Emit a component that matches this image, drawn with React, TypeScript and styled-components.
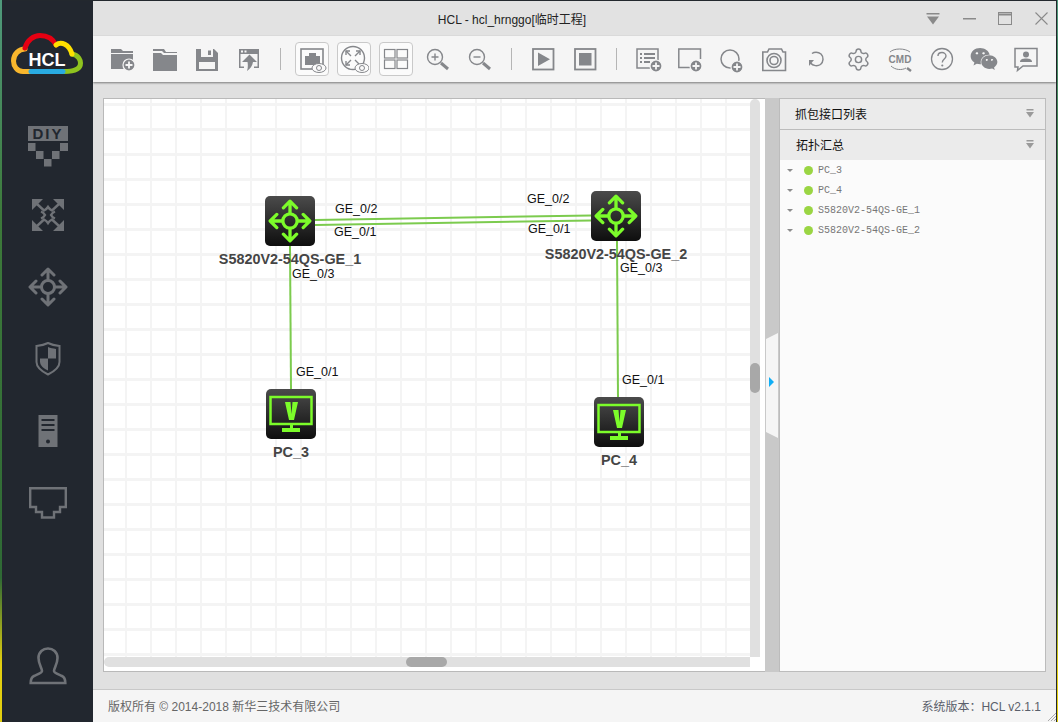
import React from 'react';
import styled, { createGlobalStyle } from 'styled-components';
import { Settings } from 'lucide-react';
import { FaWeixin } from 'react-icons/fa';

const GRAY = '#85878b';
const SIDE_GRAY = '#6f7277';
const SIDE_DARK = '#22272f';
const GREEN = '#7cfc2a';
const LINK = '#7ccb4e';

const GlobalStyle = createGlobalStyle`
  html, body {
    margin: 0;
    height: 100%;
    overflow: hidden;
  }
  body {
    background: linear-gradient(180deg, #4f9a7c 0%, #3d7a3a 30%, #2f6a35 80%, #e3cf10 92%, #e3cf10 100%);
    font-family: "Liberation Sans", "Noto Sans CJK SC", sans-serif;
  }
`;

const Window = styled.div`
  display: flex;
  height: 722px;
  margin: 0 1px 0 2px;
  box-sizing: border-box;
  border-top: 1px solid #23282e;
  border-right: 1px solid #23282e;
  background: #e0e0e0;
`;

const Sidebar = styled.nav`
  width: 91px;
  flex: none;
  background: ${SIDE_DARK};
  display: flex;
  flex-direction: column;
  align-items: center;
`;

const LogoBox = styled.div`
  height: 74px;
  display: flex;
  align-items: flex-end;
  margin-bottom: 32px;
  margin-right: 1px;
`;

const SideItem = styled.div`
  width: 60px;
  height: 72px;
  display: flex;
  align-items: center;
  justify-content: center;
`;

const SideFoot = styled.div`
  margin-top: auto;
  margin-bottom: 20px;
  height: 72px;
  display: flex;
  align-items: center;
`;

const Body = styled.div`
  flex: 1;
  min-width: 0;
  display: flex;
  flex-direction: column;
`;

const TitleBar = styled.header`
  height: 35px;
  flex: none;
  background: #e2e2e2;
  display: flex;
  align-items: center;
`;

const Title = styled.div`
  flex: 1;
  padding-left: 13px;
  text-align: center;
  font-size: 12px;
  color: #222;
`;

const WinControls = styled.div`
  display: flex;
  gap: 6px;
`;

const WinButton = styled.div`
  width: 30px;
  height: 30px;
  display: flex;
  align-items: center;
  justify-content: center;
`;

const Toolbar = styled.div`
  height: 46px;
  flex: none;
  box-sizing: border-box;
  padding-left: 9px;
  background: #f5f5f5;
  box-shadow: 0 1px 2px rgba(0, 0, 0, 0.45);
  position: relative;
  display: flex;
  align-items: center;
`;

const ToolButton = styled.div`
  width: 42px;
  height: 46px;
  flex: none;
  display: flex;
  align-items: center;
  justify-content: center;
`;

const BoxedIcon = styled.div`
  width: 34px;
  height: 34px;
  box-sizing: border-box;
  border: 1px solid #c9c9c9;
  border-radius: 4px;
  background: #fbfbfb;
  display: flex;
  align-items: center;
  justify-content: center;
`;

const ToolSep = styled.div`
  width: 21px;
  flex: none;
  display: flex;
  justify-content: center;
  &::after {
    content: '';
    width: 1px;
    height: 22px;
    background: #b5b5b5;
  }
`;

const Main = styled.main`
  flex: 1;
  min-height: 0;
  display: flex;
  padding: 16px 10px 17px 10px;
`;

const Canvas = styled.section`
  width: 662px;
  flex: none;
  box-sizing: border-box;
  border: 1px solid #b9b9b9;
  border-right: none;
  background: #fff;
  display: grid;
  grid-template-columns: 646px 10px 5px;
  grid-template-rows: 558px 10px 5px;
`;

const Stage = styled.div`
  position: relative;
  overflow: hidden;
  background-color: #fff;
  background-image:
    linear-gradient(90deg, #f4f4f4 2px, transparent 2px),
    linear-gradient(180deg, #f4f4f4 3px, transparent 3px);
  background-size: 25px 25px;
  background-position: 21px 4px;
`;

const ScrollY = styled.div`
  background: #e0e0e0;
  padding-top: 264px;
  border-radius: 5px 5px 0 0;
`;

const ThumbY = styled.div`
  height: 30px;
  border-radius: 5px;
  background: #a8a8a8;
`;

const ScrollX = styled.div`
  background: #e0e0e0;
  padding-left: 302px;
  border-radius: 5px 0 0 5px;
`;

const ThumbX = styled.div`
  width: 41px;
  height: 10px;
  border-radius: 5px;
  background: #a8a8a8;
`;

const Splitter = styled.div`
  width: 14px;
  flex: none;
  box-sizing: border-box;
  background: #c9c9c9;
  position: relative;
`;

const SplitHandle = styled.div`
  position: absolute;
  left: 1px;
  right: 1px;
  top: 235px;
  height: 105px;
  background: #f5f5f5;
  clip-path: polygon(0 6px, 100% 0, 100% 100%, 0 calc(100% - 6px));
  &::after {
    content: '';
    position: absolute;
    left: 3px;
    top: 44px;
    border-left: 5px solid #10aef5;
    border-top: 5px solid transparent;
    border-bottom: 5px solid transparent;
  }
`;

const Panel = styled.aside`
  flex: 1;
  box-sizing: border-box;
  border: 1px solid #bcbcbc;
  background: #fbfbfb;
`;

const PanelHead = styled.div`
  height: 30px;
  box-sizing: border-box;
  background: #ebebeb;
  display: flex;
  align-items: center;
  justify-content: space-between;
  padding: 0 11px 2px ${(p) => p.$indent}px;
  font-size: 12px;
  color: #111;
  font-family: "Noto Sans CJK SC", sans-serif;
  & + & {
    border-top: 1px solid #bcbcbc;
    height: 31px;
  }
`;

const Tree = styled.ul`
  list-style: none;
  margin: 0;
  padding: 0;
`;

const TreeRow = styled.li`
  height: 20px;
  display: flex;
  align-items: center;
  padding-left: 7px;
  font-family: "Liberation Mono", monospace;
  font-size: 10px;
  color: #777;
`;

const Caret = styled.span`
  width: 0;
  height: 0;
  border-top: 3px solid #8c8c8c;
  border-left: 3.5px solid transparent;
  border-right: 3.5px solid transparent;
`;

const Dot = styled.span`
  width: 9px;
  height: 9px;
  border-radius: 50%;
  background: #9ad543;
  margin: 0 5px 0 11px;
`;

const Footer = styled.footer`
  height: 33px;
  flex: none;
  box-sizing: border-box;
  border-top: 1px solid #c8c8c8;
  background: #f5f5f5;
  display: flex;
  align-items: center;
  justify-content: space-between;
  padding: 0 15px 2px 15px;
  font-size: 12px;
  color: #666;
  position: relative;
`;

const Version = styled.span`
  color: #5a5f6b;
`;

const Grip = styled.svg`
  position: absolute;
  right: 0;
  bottom: 1px;
`;

const LinkLayer = styled.svg`
  position: absolute;
  left: 0;
  top: 0;
`;

const Node = styled.div`
  position: absolute;
  left: ${(p) => p.$x}px;
  top: ${(p) => p.$y}px;
  width: 50px;
  display: flex;
  flex-direction: column;
  align-items: center;
`;

const NodeIcon = styled.div`
  width: 50px;
  height: 50px;
  border-radius: 5px;
  background: linear-gradient(180deg, #4b4b4b 0%, #0e0e0e 100%);
  display: flex;
  align-items: center;
  justify-content: center;
`;

const NodeLabel = styled.div`
  margin-top: 5px;
  font-size: 14.4px;
  line-height: 16px;
  font-weight: bold;
  color: #454545;
  white-space: nowrap;
`;

const PortLabel = styled.span`
  position: absolute;
  left: ${(p) => p.$x}px;
  top: ${(p) => p.$y}px;
  font-size: 12.5px;
  line-height: 14px;
  color: #111;
  white-space: nowrap;
`;

const Logo = () => (
  <svg width="72" height="42" viewBox="0 0 72 42" fill="none" strokeWidth="5" strokeLinecap="round">
    <path d="M20 38.5H12C6 38.5 2.5 33 2.5 28C2.5 21 8 16 14 16" stroke="#f8b62d" />
    <path d="M14 15C16 7 23 2.5 29 2.5C36 2.5 42 6 45 12" stroke="#e60012" />
    <path d="M61 21C68 22 69.5 28 69.5 30C69.5 35 65 38.5 53 38.5" stroke="#8fc31f" />
    <path d="M45 12C50 8 58 11 61 21" stroke="#ffe100" />
    <path d="M20 38.5H52" stroke="#29abe2" />
    <text x="36" y="32.5" textAnchor="middle" fill="#fff" fontFamily="Liberation Sans" fontWeight="bold" fontSize="18">
      HCL
    </text>
  </svg>
);

const DiyIcon = () => (
  <svg width="42" height="48" viewBox="0 -6 42 48" fill={SIDE_GRAY}>
    <rect x="1" y="1" width="40" height="15" />
    <text x="21" y="14" textAnchor="middle" fill={SIDE_DARK} fontFamily="Liberation Sans" fontWeight="bold" fontSize="15" letterSpacing="2">
      DIY
    </text>
    <rect x="1" y="18" width="7.5" height="8" />
    <rect x="33" y="18" width="8" height="8" />
    <rect x="9" y="26" width="7.5" height="8" />
    <rect x="25" y="26" width="7.5" height="8" />
    <rect x="17" y="34" width="7.5" height="7.5" />
  </svg>
);

const TransformIcon = () => (
  <svg width="32" height="32" viewBox="0 0 32 32" fill={SIDE_GRAY}>
    <path d="M0 0H11L0 11Z M32 0V11L21 0Z M0 32V21L11 32Z M32 32H21L32 21Z" />
    <g fill="none" stroke={SIDE_GRAY} strokeWidth="2.4">
      <path d="M5 5L12 11.500C14 10.500 15 9.500 16 8C17 9.500 18 10.500 20 11.500L27 5" />
      <path d="M5 27L12 20.500C14 21.500 15 22.500 16 24C17 22.500 18 21.500 20 20.500L27 27" />
      <path d="M9 12.500C11.500 13.500 12.500 15 13 16C12.500 17 11.500 18.500 9 19.500" />
      <path d="M23 12.500C20.500 13.500 19.500 15 19 16C19.500 17 20.500 18.500 23 19.500" />
    </g>
  </svg>
);

const CrossArrows = ({ color, size }: { color: string; size: number }) => (
  <svg width={size} height={size} viewBox="0 0 40 40" fill={color} stroke={color}>
    <circle cx="20" cy="20" r="6.500" fill="none" strokeWidth="3" />
    <g strokeWidth="3" strokeLinecap="round" strokeLinejoin="round" fill="none">
      <path d="M20 13V3M14 8L20 2 26 8" />
      <path d="M20 27V37M14 32L20 38 26 32" />
      <path d="M13 20H3M8 14L2 20 8 26" />
      <path d="M27 20H37M32 14L38 20 32 26" />
    </g>
  </svg>
);

const ShieldIcon = () => (
  <svg width="26" height="34" viewBox="0 0 26 34" fill={SIDE_GRAY}>
    <path d="M1.5 4C6 3.5 10 2.5 13 1C16 2.5 20 3.5 24.5 4V20C24.5 26 18 30 13 32.5C8 30 1.5 26 1.5 20Z" fill="none" stroke={SIDE_GRAY} strokeWidth="2" />
    <path d="M13 5C15.5 6 18 6.500 21 7V16.500H13Z" />
    <path d="M5 16.500H13V28.500C9 26.500 5 24 5 19.500Z" />
  </svg>
);

const ServerIcon = () => (
  <svg width="20" height="32" viewBox="0 0 20 32" fill={SIDE_GRAY}>
    <rect x="0.500" y="0" width="19" height="32" />
    <rect x="3.500" y="4" width="13" height="2" fill={SIDE_DARK} />
    <rect x="3.500" y="9" width="13" height="2" fill={SIDE_DARK} />
    <rect x="3.500" y="14" width="13" height="2" fill={SIDE_DARK} />
    <circle cx="10" cy="26.500" r="2" fill={SIDE_DARK} />
  </svg>
);

const PortIcon = () => (
  <svg width="38" height="32" viewBox="0 0 38 32" fill="none" stroke={SIDE_GRAY} strokeWidth="2.4">
    <path d="M1.200 1.200H36.800V20H31V25H25V30.500H13V25H7V20H1.200Z" />
  </svg>
);

const UserIcon = () => (
  <svg width="38" height="38" viewBox="0 0 38 38" fill="none" stroke={SIDE_GRAY} strokeWidth="2.600">
    <path d="M13 24C13 21 9.500 17 9.500 11C9.500 5 14 1.500 19 1.500C24 1.500 28.500 5 28.500 11C28.500 17 25 21 25 24C25 26 30 27.500 33 29C35 30 36.300 32.500 36.300 36H1.700C1.700 32.500 3 30 5 29C8 27.500 13 26 13 24Z" />
  </svg>
);

const Tool = ({ children }: { children: React.ReactNode }) => (
  <svg width="30" height="30" viewBox="0 0 30 30" fill={GRAY} stroke="none">
    {children}
  </svg>
);

const PlusBadge = ({ cx, cy }: { cx: number; cy: number }) => (
  <g>
    <circle cx={cx} cy={cy} r="6" fill={GRAY} stroke="#f5f5f5" strokeWidth="1.200" />
    <path d={`M${cx - 3.5} ${cy}H${cx + 3.500}M${cx} ${cy - 3.500}V${cy + 3.500}`} stroke="#f5f5f5" strokeWidth="1.800" />
  </g>
);

const Eye = ({ cx, cy }: { cx: number; cy: number }) => (
  <g fill="#fbfbfb" stroke={GRAY} strokeWidth="1">
    <ellipse cx={cx} cy={cy} rx="7" ry="4.500" />
    <circle cx={cx} cy={cy} r="2.500" />
  </g>
);

const toolIcons: Record<string, React.ReactNode> = {
  newFolder: (
    <Tool>
      <path d="M3 5H13L15 7H25V9H3Z" />
      <path d="M3 10H25V25H3Z" />
      <PlusBadge cx={21} cy={21} />
    </Tool>
  ),
  folder: (
    <Tool>
      <path d="M3 5H14L16 8H27V9H14L12 7H3Z" />
      <path d="M3 9H11L13 11H27V27H3Z" />
    </Tool>
  ),
  save: (
    <Tool>
      <path fillRule="evenodd" d="M4 5H22L26 9V27H4ZM9 5V13H21V5ZM16 6.500V11H19V6.500ZM7 18V25H23V18Z" />
    </Tool>
  ),
  exportFile: (
    <Tool>
      <path fillRule="evenodd" d="M5 5H25V24H20V22.500H23.500V10H6.500V22.500H10V24H5ZM7 6.500V8.500H9V6.500ZM10.500 6.500V8.500H12.500V6.500Z" />
      <path d="M15.500 10.500L23 18H19C18.500 22 16 25 13 27C14 24 14 21 13.500 18H8Z" />
    </Tool>
  ),
  viewDevice: (
    <Tool>
      <rect x="4" y="5" width="22" height="20" fill="none" stroke={GRAY} strokeWidth="1.600" />
      <path d="M8 12H12V9H19V12H23V21H8Z" />
      <Eye cx={22} cy={24} />
    </Tool>
  ),
  viewTopo: (
    <Tool>
      <circle cx="14" cy="14" r="11.500" fill="none" stroke={GRAY} strokeWidth="1.400" />
      <g fill="none" stroke={GRAY} strokeWidth="1.400">
        <path d="M7 7L12 12M21 7L16 12M7 21L12 16M21 21L16 16" />
        <path d="M7 11V7H11M21 11V7H17M7 17V21H11" />
      </g>
      <Eye cx={23} cy={24} />
    </Tool>
  ),
  grid: (
    <Tool>
      <g fill="none" stroke={GRAY} strokeWidth="1.200">
        <rect x="3.500" y="5.500" width="10.500" height="8.500" />
        <rect x="16" y="5.500" width="10.500" height="8.500" />
        <rect x="3.500" y="16" width="10.500" height="8.500" />
        <rect x="16" y="16" width="10.500" height="8.500" />
      </g>
    </Tool>
  ),
  zoomIn: (
    <Tool>
      <circle cx="12" cy="13" r="7.500" fill="none" stroke={GRAY} strokeWidth="1.400" />
      <path d="M8.500 13H15.500M12 9.500V16.500" stroke={GRAY} strokeWidth="1.400" />
      <path d="M18 19L25 25" stroke={GRAY} strokeWidth="3" />
    </Tool>
  ),
  zoomOut: (
    <Tool>
      <circle cx="12" cy="13" r="7.500" fill="none" stroke={GRAY} strokeWidth="1.400" />
      <path d="M8.500 13H15.500" stroke={GRAY} strokeWidth="1.400" />
      <path d="M18 19L25 25" stroke={GRAY} strokeWidth="3" />
    </Tool>
  ),
  play: (
    <Tool>
      <rect x="5" y="5" width="20.500" height="20.500" fill="none" stroke={GRAY} strokeWidth="1.800" />
      <path d="M10 8.500L22 15.200L10 22Z" />
    </Tool>
  ),
  stop: (
    <Tool>
      <rect x="5" y="5" width="20.500" height="20.500" fill="none" stroke={GRAY} strokeWidth="1.800" />
      <rect x="9" y="9" width="12.500" height="12.500" />
    </Tool>
  ),
  listAdd: (
    <Tool>
      <rect x="4" y="5" width="21" height="19" fill="none" stroke={GRAY} strokeWidth="1.500" />
      <path d="M7 9H9V11H7ZM7 13H9V15H7ZM7 17H9V19H7ZM11 9H22V11H11ZM11 13H22V15H11ZM11 17H17V19H11Z" />
      <PlusBadge cx={23} cy={22} />
    </Tool>
  ),
  rectAdd: (
    <Tool>
      <path d="M15 23.500H3.800V5H25.500V15" fill="none" stroke={GRAY} strokeWidth="1.500" />
      <PlusBadge cx={21} cy={22} />
    </Tool>
  ),
  circleAdd: (
    <Tool>
      <circle cx="13" cy="15" r="9" fill="none" stroke={GRAY} strokeWidth="1.500" />
      <PlusBadge cx={20} cy={23} />
    </Tool>
  ),
  camera: (
    <Tool>
      <path d="M3.800 8H8.500L10 5H22.500L24 8H26.500V26.500H3.800Z" fill="none" stroke={GRAY} strokeWidth="1.600" />
      <circle cx="15" cy="16.500" r="7" fill="none" stroke={GRAY} strokeWidth="1.600" />
      <circle cx="15" cy="16.500" r="4" fill="none" stroke={GRAY} strokeWidth="1.600" />
    </Tool>
  ),
  refresh: (
    <Tool>
      <path d="M11 9.500C13 8 17 7.500 20 10C23 13 22.500 18 19.500 20.500C16.500 22.500 12 22 9.500 19" fill="none" stroke={GRAY} strokeWidth="1.500" />
      <path d="M8 16H13L8 22Z" />
    </Tool>
  ),
  gear: <Settings size={25} strokeWidth={1.400} color={GRAY} />,
  cmd: (
    <Tool>
      <path d="M5 8C9 4 20 4 25 8" fill="none" stroke={GRAY} strokeWidth="1" />
      <text x="15" y="18.500" textAnchor="middle" fontFamily="Liberation Sans" fontWeight="bold" fontSize="10" fill={GRAY}>
        CMD
      </text>
      <path d="M6 22C10 26 17 26.500 21 24" fill="none" stroke={GRAY} strokeWidth="1" />
      <path d="M22 24L26 27" stroke={GRAY} strokeWidth="2.400" />
    </Tool>
  ),
  help: (
    <Tool>
      <circle cx="15" cy="15" r="10.500" fill="none" stroke={GRAY} strokeWidth="1.300" />
      <path d="M11 12C11 9.500 13 8.500 15 8.500C17 8.500 19 9.800 19 12C19 15 15.300 15 15.300 18.500" fill="none" stroke={GRAY} strokeWidth="1.400" />
      <circle cx="15.300" cy="21.500" r="1.100" />
    </Tool>
  ),
  wechat: <FaWeixin size={28} color={GRAY} />,
  feedback: (
    <Tool>
      <path d="M7 23H4V4.500H26V22H12L6.500 26.500Z" fill="none" stroke={GRAY} strokeWidth="1.500" />
      <circle cx="15" cy="10.500" r="3" />
      <path d="M9 18C9 15 12 14.500 15 14.500C18 14.500 21 15 21 18Z" />
    </Tool>
  ),
};

type ToolEntry = { sep: true } | { id: string; boxed?: boolean };

const toolbar: ToolEntry[] = [
  { id: 'newFolder' },
  { id: 'folder' },
  { id: 'save' },
  { id: 'exportFile' },
  { sep: true },
  { id: 'viewDevice', boxed: true },
  { id: 'viewTopo', boxed: true },
  { id: 'grid', boxed: true },
  { id: 'zoomIn' },
  { id: 'zoomOut' },
  { sep: true },
  { id: 'play' },
  { id: 'stop' },
  { sep: true },
  { id: 'listAdd' },
  { id: 'rectAdd' },
  { id: 'circleAdd' },
  { id: 'camera' },
  { id: 'refresh' },
  { id: 'gear' },
  { id: 'cmd' },
  { id: 'help' },
  { id: 'wechat' },
  { id: 'feedback' },
];

const PanelChevron = () => (
  <svg width="8" height="9" viewBox="0 0 8 9" fill="#9a9a9a">
    <rect x="0.500" y="0" width="7" height="1.500" />
    <path d="M0 3H8L4 8.500Z" />
  </svg>
);

const PcIcon = () => (
  <svg width="50" height="50" viewBox="0 0 50 50">
    <rect x="4.500" y="8" width="41" height="27" fill="none" stroke={GREEN} strokeWidth="2.500" />
    <path d="M19 13H24.500L25.500 25L26.500 13H32L28 31H23Z" fill={GREEN} />
    <path d="M24 35H27V39H34V43H16V39H24Z" fill={GREEN} />
  </svg>
);

const links = [
  { x1: 211, y1: 121, x2: 487, y2: 116.5 },
  { x1: 211, y1: 126, x2: 487, y2: 121.5 },
  { x1: 186, y1: 147, x2: 187, y2: 290 },
  { x1: 513, y1: 142, x2: 514, y2: 298 },
];

const nodes = [
  { name: 'S5820V2-54QS-GE_1', x: 161, y: 97, kind: 'switch' },
  { name: 'S5820V2-54QS-GE_2', x: 487, y: 92, kind: 'switch' },
  { name: 'PC_3', x: 162, y: 290, kind: 'pc' },
  { name: 'PC_4', x: 490, y: 298, kind: 'pc' },
];

const ports = [
  { text: 'GE_0/2', x: 231, y: 103 },
  { text: 'GE_0/1', x: 230, y: 126 },
  { text: 'GE_0/3', x: 188, y: 168 },
  { text: 'GE_0/2', x: 423, y: 93 },
  { text: 'GE_0/1', x: 424, y: 123 },
  { text: 'GE_0/3', x: 516, y: 162 },
  { text: 'GE_0/1', x: 192, y: 266 },
  { text: 'GE_0/1', x: 518, y: 274 },
];

const treeItems = ['PC_3', 'PC_4', 'S5820V2-54QS-GE_1', 'S5820V2-54QS-GE_2'];

const App = () => {
  return (
    <>
      <GlobalStyle />
      <Window>
        <Sidebar>
          <LogoBox>
            <Logo />
          </LogoBox>
          <SideItem>
            <DiyIcon />
          </SideItem>
          <SideItem>
            <TransformIcon />
          </SideItem>
          <SideItem>
            <CrossArrows color={SIDE_GRAY} size={40} />
          </SideItem>
          <SideItem>
            <ShieldIcon />
          </SideItem>
          <SideItem>
            <ServerIcon />
          </SideItem>
          <SideItem>
            <PortIcon />
          </SideItem>
          <SideFoot>
            <UserIcon />
          </SideFoot>
        </Sidebar>
        <Body>
          <TitleBar>
            <Title>HCL - hcl_hrnggo[临时工程]</Title>
            <WinControls>
              <WinButton>
                <svg width="14" height="12" viewBox="0 0 14 12" fill="#8a8a8a">
                  <rect x="0.500" y="0" width="13" height="1.500" />
                  <path d="M1 3.500H13L7 11.500Z" />
                </svg>
              </WinButton>
              <WinButton>
                <svg width="13" height="2" viewBox="0 0 13 2" fill="#8a8a8a">
                  <rect width="13" height="1.500" />
                </svg>
              </WinButton>
              <WinButton>
                <svg width="14" height="13" viewBox="0 0 14 13" fill="none" stroke="#8a8a8a">
                  <rect x="0.500" y="0.500" width="13" height="12" />
                  <path d="M0 2.500H14" strokeWidth="2" />
                </svg>
              </WinButton>
              <WinButton>
                <svg width="13" height="13" viewBox="0 0 13 13" stroke="#8a8a8a" strokeWidth="1.100">
                  <path d="M0.500 0.500L12.500 12.500M12.500 0.500L0.500 12.500" />
                </svg>
              </WinButton>
            </WinControls>
          </TitleBar>
          <Toolbar>
            {toolbar.map((entry, i) =>
              'sep' in entry ? (
                <ToolSep key={i} />
              ) : (
                <ToolButton key={entry.id}>
                  {entry.boxed ? <BoxedIcon>{toolIcons[entry.id]}</BoxedIcon> : toolIcons[entry.id]}
                </ToolButton>
              ),
            )}
          </Toolbar>
          <Main>
            <Canvas>
              <Stage>
                <LinkLayer width="646" height="558" stroke={LINK} strokeWidth="2">
                  {links.map((l, i) => (
                    <line key={i} {...l} />
                  ))}
                </LinkLayer>
                {ports.map((p, i) => (
                  <PortLabel key={i} $x={p.x} $y={p.y}>
                    {p.text}
                  </PortLabel>
                ))}
                {nodes.map((n) => (
                  <Node key={n.name} $x={n.x} $y={n.y}>
                    <NodeIcon>
                      {n.kind === 'switch' ? <CrossArrows color={GREEN} size={44} /> : <PcIcon />}
                    </NodeIcon>
                    <NodeLabel>{n.name}</NodeLabel>
                  </Node>
                ))}
              </Stage>
              <ScrollY>
                <ThumbY />
              </ScrollY>
              <div />
              <ScrollX>
                <ThumbX />
              </ScrollX>
            </Canvas>
            <Splitter>
              <SplitHandle />
            </Splitter>
            <Panel>
              <PanelHead $indent={15}>
                抓包接口列表
                <PanelChevron />
              </PanelHead>
              <PanelHead $indent={16}>
                拓扑汇总
                <PanelChevron />
              </PanelHead>
              <Tree>
                {treeItems.map((name) => (
                  <TreeRow key={name}>
                    <Caret />
                    <Dot />
                    {name}
                  </TreeRow>
                ))}
              </Tree>
            </Panel>
          </Main>
          <Footer>
            <span>版权所有 © 2014-2018 新华三技术有限公司</span>
            <Version>系统版本：HCL v2.1.1</Version>
            <Grip width="8" height="8" viewBox="0 0 8 8" stroke="#aaa">
              <path d="M0 8L8 0M3 8L8 3M6 8L8 6" />
            </Grip>
          </Footer>
        </Body>
      </Window>
    </>
  );
};

export default App;
